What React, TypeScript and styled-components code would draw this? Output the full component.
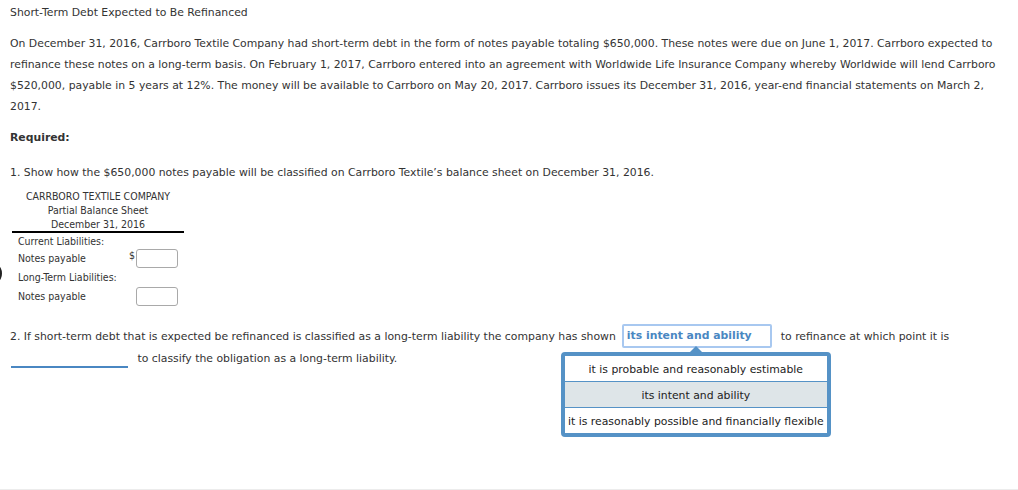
import React from "react";
import styled, { createGlobalStyle } from "styled-components";

const Global = createGlobalStyle`
  html, body { margin: 0; padding: 0; background: #fff; }
  body { font-family: "DejaVu Sans", Verdana, sans-serif; color: #333; }
`;

const Page = styled.div`
  position: relative;
  width: 1018px;
  height: 490px;
  box-sizing: border-box;
  padding: 2px 10px 0 10px;
  font-size: 10.85px;
  line-height: 21px;
  border-bottom: 1px solid #ececec;
  overflow: hidden;
`;

const Title = styled.div`
  margin: 0;
`;

const Para = styled.p`
  margin: 10px 0 0 0;
  width: 995px;
`;

const Required = styled.div`
  margin-top: 10px;
  font-weight: bold;
`;

const Step = styled.div`
  margin-top: 14px;
`;

const Sheet = styled.div`
  margin-top: 6px;
  margin-left: 2px;
  width: 172px;
  font-family: "DejaVu Sans Condensed", Tahoma, sans-serif;
  font-size: 10.5px;
  color: #333;
`;

const SheetHead = styled.div`
  text-align: center;
  line-height: 14px;
  border-bottom: 2px solid #000;
`;

const SheetRow = styled.div<{ $h?: number }>`
  display: flex;
  align-items: center;
  height: ${(p) => p.$h ?? 19}px;
  padding-left: 6px;
`;

const RowLabel = styled.span`
  flex: 1;
`;

const Dollar = styled.span`
  flex: 0 0 7px;
  text-align: left;
  line-height: 12px;
  align-self: flex-start;
`;

const Amount = styled.span`
  flex: 0 0 42px;
  height: 19px;
  box-sizing: border-box;
  border: 1px solid #a9a9a9;
  border-radius: 3px;
  margin-right: 6px;
  background: #fff;
`;

const EdgeMark = styled.div`
  position: absolute;
  left: -6px;
  top: 266px;
  width: 8px;
  height: 15px;
  border: 2px solid #222;
  border-radius: 50%;
  box-sizing: border-box;
`;

const Q2 = styled.div`
  margin-top: 20px;
  position: relative;
  width: 960px;
`;

const SelectWrap = styled.span`
  position: relative;
  display: inline-block;
  vertical-align: top;
  margin: 0 9px 0 6px;
`;

const Select = styled.span`
  display: inline-block;
  box-sizing: border-box;
  width: 150px;
  height: 24px;
  margin-top: -2px;
  line-height: 20px;
  padding-left: 3px;
  border: 2px solid #a8c8f0;
  border-radius: 2px;
  color: #4a87c2;
  font-weight: bold;
  font-size: 10.85px;
  vertical-align: top;
`;

const Blank = styled.span`
  display: inline-block;
  width: 117px;
  height: 18px;
  border-bottom: 2px solid #4a87c2;
  vertical-align: top;
  margin: 0 6px 0 1px;
`;

const Menu = styled.div`
  position: absolute;
  left: -61px;
  top: 26px;
  width: 270px;
  box-sizing: border-box;
  border: 4px solid #5592c6;
  border-radius: 4px;
  background: #fff;
  z-index: 2;
  &::before {
    content: "";
    position: absolute;
    top: -10px;
    left: 125px;
    border-left: 6px solid transparent;
    border-right: 6px solid transparent;
    border-bottom: 6px solid #5592c6;
  }
`;

const Option = styled.div<{ $active?: boolean; $last?: boolean }>`
  height: 25px;
  line-height: 27px;
  text-align: center;
  white-space: nowrap;
  font-size: 10.85px;
  color: #222;
  background: ${(p) => (p.$active ? "#dee5e8" : "#fff")};
  border-bottom: ${(p) => (p.$last ? "none" : "1px solid #5592c6")};
`;

export default function App() {
  return (
    <>
      <Global />
      <Page>
        <Title>Short-Term Debt Expected to Be Refinanced</Title>
        <Para>
          On December 31, 2016, Carrboro Textile Company had short-term debt in the form of notes payable totaling
          $650,000. These notes were due on June 1, 2017. Carrboro expected to refinance these notes on a long-term
          basis. On February 1, 2017, Carrboro entered into an agreement with Worldwide Life Insurance Company whereby
          Worldwide will lend Carrboro $520,000, payable in 5 years at 12%. The money will be available to Carrboro on
          May 20, 2017. Carrboro issues its December 31, 2016, year-end financial statements on March 2, 2017.
        </Para>
        <Required>Required:</Required>
        <Step>1. Show how the $650,000 notes payable will be classified on Carrboro Textile’s balance sheet on December 31, 2016.</Step>
        <Sheet>
          <SheetHead>
            <div>CARRBORO TEXTILE COMPANY</div>
            <div>Partial Balance Sheet</div>
            <div>December 31, 2016</div>
          </SheetHead>
          <SheetRow $h={16}>
            <RowLabel>Current Liabilities:</RowLabel>
          </SheetRow>
          <SheetRow>
            <RowLabel>Notes payable</RowLabel>
            <Dollar>$</Dollar>
            <Amount />
          </SheetRow>
          <SheetRow>
            <RowLabel>Long-Term Liabilities:</RowLabel>
          </SheetRow>
          <SheetRow>
            <RowLabel>Notes payable</RowLabel>
            <Dollar />
            <Amount />
          </SheetRow>
        </Sheet>
        <EdgeMark />
        <Q2>
          2. If short-term debt that is expected be refinanced is classified as a long-term liability the company has shown
          <SelectWrap>
            <Select>its intent and ability</Select>
            <Menu>
              <Option>it is probable and reasonably estimable</Option>
              <Option $active>its intent and ability</Option>
              <Option $last>it is reasonably possible and financially flexible</Option>
            </Menu>
          </SelectWrap>
          to refinance at which point it is <Blank /> to classify the obligation as a long-term liability.
        </Q2>
      </Page>
    </>
  );
}
